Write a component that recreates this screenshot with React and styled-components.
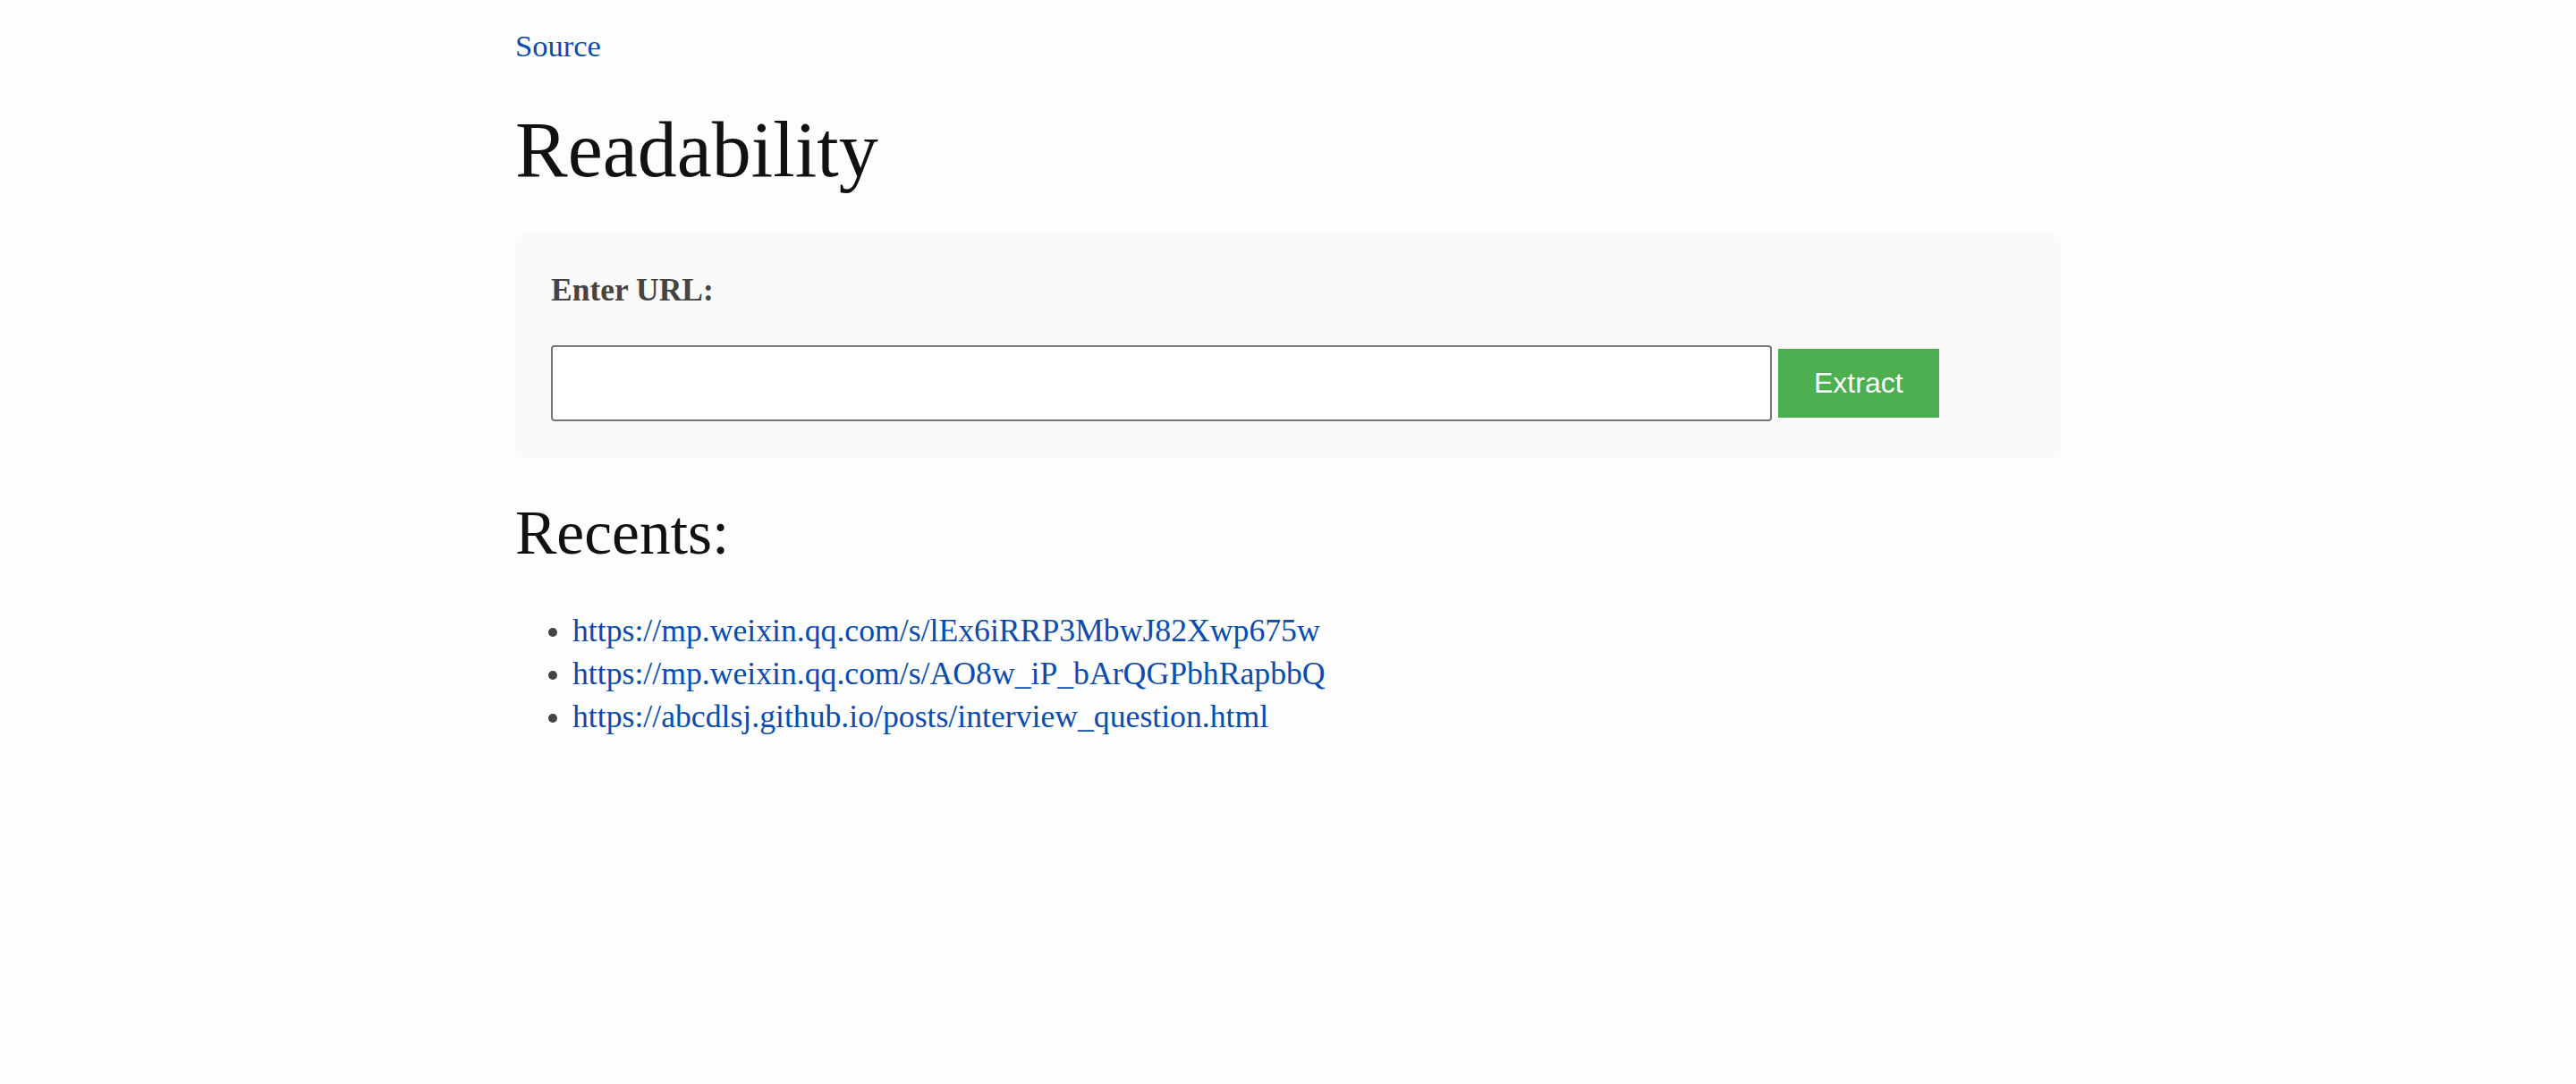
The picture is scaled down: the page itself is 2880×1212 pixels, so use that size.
import React from "react";
import styled, { createGlobalStyle } from "styled-components";

const Global = createGlobalStyle`
  html, body {
    margin: 0;
    padding: 0;
    background: #fdfdfd;
  }
  body {
    font-family: "Liberation Serif", "Times New Roman", serif;
    font-size: 34.5px;
    line-height: 48px;
    color: #111;
  }
`;

const Page = styled.main`
  width: 1728px;
  margin: 0 auto;
  padding-top: 27px;
  display: flex;
  flex-direction: column;
`;

const SourceLink = styled.a`
  color: #0a4cb0;
  text-decoration: none;
  align-self: flex-start;
  line-height: 48px;
`;

const Title = styled.h1`
  margin: 41px 0 0;
  font-size: 88px;
  line-height: 103px;
  font-weight: 400;
  color: #111;
`;

const Card = styled.section`
  margin-top: 43px;
  background: #fafafa;
  border-radius: 8px;
  padding: 38px 40px 41px;
  display: flex;
  flex-direction: column;
  gap: 38px;
`;

const Label = styled.label`
  font-weight: 700;
  font-size: 35.5px;
  line-height: 48px;
  color: #444;
`;

const Row = styled.div`
  display: flex;
  align-items: center;
  gap: 7px;
`;

const UrlInput = styled.input`
  box-sizing: border-box;
  width: 1365px;
  height: 85px;
  border: 2px solid #767676;
  border-radius: 4px;
  background: #fff;
  padding: 0 12px;
  font-size: 32px;
  font-family: "Liberation Sans", Arial, sans-serif;
  outline: none;
`;

const ExtractButton = styled.button`
  box-sizing: border-box;
  height: 77px;
  padding: 0 40px;
  border: none;
  background: #4caf50;
  color: #fff;
  font-family: "Liberation Sans", Arial, sans-serif;
  font-size: 32px;
  cursor: pointer;
`;

const SubTitle = styled.h2`
  margin: 42px 0 0;
  font-size: 69.5px;
  line-height: 83px;
  font-weight: 400;
  color: #111;
`;

const RecentList = styled.ul`
  margin: 44px 0 0;
  padding-left: 64px;
  color: #444;
`;

const RecentItem = styled.li`
  line-height: 48px;
`;

const RecentLink = styled.a`
  color: #0a4cb0;
  text-decoration: none;
  font-size: 35.7px;
`;

const recents = [
  "https://mp.weixin.qq.com/s/lEx6iRRP3MbwJ82Xwp675w",
  "https://mp.weixin.qq.com/s/AO8w_iP_bArQGPbhRapbbQ",
  "https://abcdlsj.github.io/posts/interview_question.html",
];

export default function App() {
  return (
    <>
      <Global />
      <Page>
        <SourceLink href="#">Source</SourceLink>
        <Title>Readability</Title>
        <Card>
          <Label htmlFor="url">Enter URL:</Label>
          <Row>
            <UrlInput id="url" type="text" />
            <ExtractButton type="button">Extract</ExtractButton>
          </Row>
        </Card>
        <SubTitle>Recents:</SubTitle>
        <RecentList>
          {recents.map((u) => (
            <RecentItem key={u}>
              <RecentLink href="#">{u}</RecentLink>
            </RecentItem>
          ))}
        </RecentList>
      </Page>
    </>
  );
}
